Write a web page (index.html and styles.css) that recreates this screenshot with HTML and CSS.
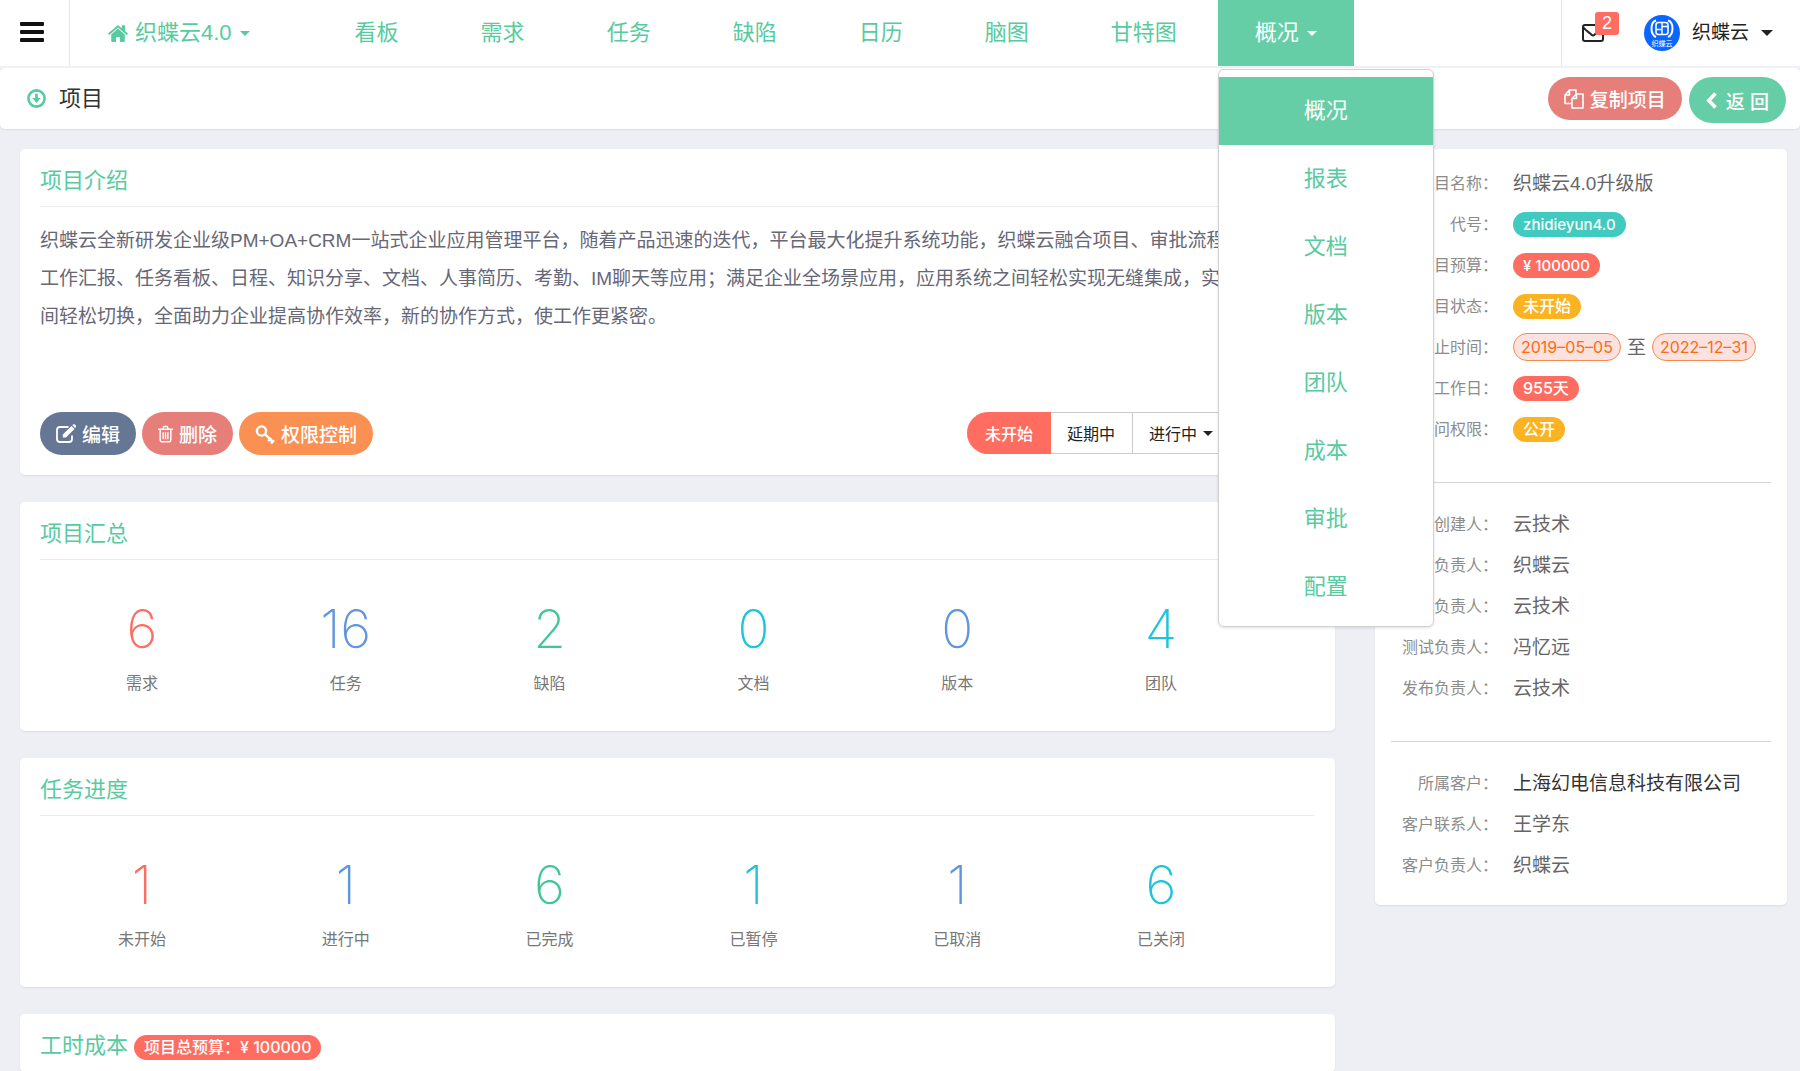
FILE: index.html
```html
<!DOCTYPE html>
<html lang="zh-CN">
<head>
<meta charset="utf-8">
<title>项目 - 织蝶云</title>
<meta name="viewport" content="width=device-width, initial-scale=1">
<link rel="stylesheet" href="styles.css">
</head>
<body>
<header class="topbar">
  <button class="menu-toggle" type="button" aria-label="菜单">
    <span class="bar"></span><span class="bar"></span><span class="bar"></span>
  </button>
  <nav class="nav">
    <a class="nav-home" href="#">
      <svg class="icon-home" viewBox="0 0 20 17" aria-hidden="true"><path fill="currentColor" d="M10 3.6 3.2 9.4V16c0 .5.4.9.9.9h4V12h3.8v4.900h4c.5 0 .9-.4.9-.9V9.400zM19.700 8.200 17 5.900V.8c0-.3-.2-.5-.5-.5h-2.200c-.3 0-.5.2-.5.5v2.400L11.100.9c-.6-.5-1.600-.5-2.200 0L.3 8.200c-.2.2-.2.500-.100.700l.700.800c.2.200.5.200.7.100L10 2.500l8.400 7.300c.2.100.5.100.7-.1l.7-.8c.1-.2.100-.5-.1-.7z"/></svg>
      <span>织蝶云4.0</span><span class="caret"></span>
    </a>
    <a class="nav-item" href="#">看板</a>
    <a class="nav-item" href="#">需求</a>
    <a class="nav-item" href="#">任务</a>
    <a class="nav-item" href="#">缺陷</a>
    <a class="nav-item" href="#">日历</a>
    <a class="nav-item" href="#">脑图</a>
    <a class="nav-item" href="#">甘特图</a>
    <div class="nav-drop">
      <a class="nav-current" href="#">概况<span class="caret"></span></a>
      <div class="dropdown">
        <a class="dropdown-item active" href="#">概况</a>
        <a class="dropdown-item" href="#">报表</a>
        <a class="dropdown-item" href="#">文档</a>
        <a class="dropdown-item" href="#">版本</a>
        <a class="dropdown-item" href="#">团队</a>
        <a class="dropdown-item" href="#">成本</a>
        <a class="dropdown-item" href="#">审批</a>
        <a class="dropdown-item" href="#">配置</a>
      </div>
    </div>
  </nav>
  <div class="account">
    <a class="mail" href="#" aria-label="消息">
      <svg class="icon-mail" viewBox="0 0 22 18" fill="none" stroke="currentColor" stroke-width="2" stroke-linejoin="round" aria-hidden="true"><rect x="1" y="1" width="20" height="16" rx="2"/><path d="M1.500 3.500c2 3 6 5.200 8 7.200 1 .9 2 .9 3 0 2-2 6-4.200 8-7.200"/></svg>
      <span class="mail-count">2</span>
    </a>
    <a class="user" href="#">
      <svg class="avatar" viewBox="0 0 36 36" aria-hidden="true">
        <circle cx="18" cy="18" r="18" fill="#0b66ff"/>
        <g fill="none" stroke="#fff" stroke-width="2"><path d="M12 5.500C8.500 6.500 7.500 9 7.500 13.500s1 7 4.500 8.500M24 5.500c3.500 1 4.500 3.500 4.500 8s-1 7-4.500 8.500"/><rect x="12" y="7.500" width="12" height="12" rx="2.500" stroke-width="1.600"/><path d="M18 7.500v12M12 14.500h6M18 11.500h6" stroke-width="1.400"/></g>
        <text x="18" y="30.500" text-anchor="middle" class="avatar-text">织蝶云</text>
      </svg>
      <span>织蝶云</span><span class="caret caret-user"></span>
    </a>
  </div>
</header>

<section class="subbar">
  <h1 class="page-title">
    <svg class="icon-circle" viewBox="0 0 18 18" aria-hidden="true"><circle cx="9" cy="9" r="7.700" fill="none" stroke="currentColor" stroke-width="2.400"/><path fill="currentColor" d="M7.700 4.500h2.600v4h2.700L9 13.200 5 8.500h2.700z"/></svg>
    项目
  </h1>
  <div class="page-actions">
    <button class="btn btn-red" type="button">
      <svg class="icon" viewBox="0 0 20 20" fill="none" stroke="currentColor" stroke-width="1.600" stroke-linejoin="round" aria-hidden="true"><path d="M8 14.500H1V6l4.500-5H12v4M5.500 1v5H1M12.500 5H19v14H8v-9.500zM12.500 5v4.500H8"/></svg>
      复制项目
    </button>
    <button class="btn btn-green" type="button">
      <svg class="icon-back" viewBox="0 0 11 17" fill="none" stroke="currentColor" stroke-width="3.600" aria-hidden="true"><path d="M9.500 1.500 2.800 8.500l6.700 7"/></svg>
      返 回
    </button>
  </div>
</section>

<main class="content">
  <div class="main-column">
    <section class="card">
      <h2 class="card-title">项目介绍</h2>
      <p class="intro">织蝶云全新研发企业级PM+OA+CRM一站式企业应用管理平台，随着产品迅速的迭代，平台最大化提升系统功能，织蝶云融合项目、审批流程、客户、工作汇报、任务看板、日程、知识分享、文档、人事简历、考勤、IM聊天等应用；满足企业全场景应用，应用系统之间轻松实现无缝集成，实现系统之间轻松切换，全面助力企业提高协作效率，新的协作方式，使工作更紧密。</p>
      <div class="card-actions">
        <div class="action-group">
          <button class="btn btn-slate" type="button">
            <svg class="icon" viewBox="0 0 20 20" fill="none" stroke="currentColor" aria-hidden="true"><path stroke-width="1.800" d="M12.500 3H4C2.300 3 1 4.300 1 6v9c0 1.700 1.300 3 3 3h9c1.700 0 3-1.300 3-3v-3.500"/><path fill="currentColor" stroke="none" d="m15.500 2 3 3-8.600 8.600H6.800v-3.100zM16.300 1.300l.8-.8c.5-.5 1.200-.5 1.700 0l1 1c.5.500.5 1.200 0 1.700l-.8.800z"/></svg>
            编辑
          </button>
          <button class="btn btn-red" type="button">
            <svg class="icon icon-narrow" viewBox="0 0 16 18" fill="none" stroke="currentColor" stroke-width="1.500" aria-hidden="true"><path d="M0 4h16M2.300 4v11.500c0 1 .7 1.700 1.500 1.700h8.400c.8 0 1.500-.7 1.500-1.700V4M5 4l.8-2.300c.1-.5.400-.7.900-.7h2.600c.5 0 .8.200.9.700L11 4M5.500 7v7.500M8 7v7.500M10.500 7v7.500"/></svg>
            删除
          </button>
          <button class="btn btn-orange" type="button">
            <svg class="icon" viewBox="0 0 20 20" fill="none" stroke="currentColor" aria-hidden="true"><circle cx="6.500" cy="7" r="4.600" stroke-width="2.400"/><path stroke-width="2.400" d="m9.700 10 8.600 8.200M13.200 17.200l3-3.200M16 19.500l3-3.200"/></svg>
            权限控制
          </button>
        </div>
        <div class="segmented">
          <button class="segment active" type="button">未开始</button>
          <button class="segment" type="button">延期中</button>
          <button class="segment" type="button">进行中<span class="caret caret-segment"></span></button>
          <button class="segment" type="button">已完成</button>
        </div>
      </div>
    </section>

    <section class="card">
      <h2 class="card-title">项目汇总</h2>
      <ul class="stats">
        <li class="stat red"><strong>6</strong><span>需求</span></li>
        <li class="stat blue"><strong>16</strong><span>任务</span></li>
        <li class="stat green"><strong>2</strong><span>缺陷</span></li>
        <li class="stat cyan"><strong>0</strong><span>文档</span></li>
        <li class="stat blue"><strong>0</strong><span>版本</span></li>
        <li class="stat cyan"><strong>4</strong><span>团队</span></li>
      </ul>
    </section>

    <section class="card">
      <h2 class="card-title">任务进度</h2>
      <ul class="stats">
        <li class="stat red"><strong>1</strong><span>未开始</span></li>
        <li class="stat blue"><strong>1</strong><span>进行中</span></li>
        <li class="stat green"><strong>6</strong><span>已完成</span></li>
        <li class="stat cyan"><strong>1</strong><span>已暂停</span></li>
        <li class="stat blue"><strong>1</strong><span>已取消</span></li>
        <li class="stat cyan"><strong>6</strong><span>已关闭</span></li>
      </ul>
    </section>

    <section class="card">
      <h2 class="card-title">工时成本 <span class="badge badge-red">项目总预算：¥ 100000</span></h2>
    </section>
  </div>

  <aside class="card side">
    <dl class="facts">
      <dt>项目名称：</dt><dd>织蝶云4.0升级版</dd>
      <dt>代号：</dt><dd><span class="badge badge-teal badge-latin">zhidieyun4.0</span></dd>
      <dt>项目预算：</dt><dd><span class="badge badge-red badge-latin">¥ 100000</span></dd>
      <dt>项目状态：</dt><dd><span class="badge badge-amber">未开始</span></dd>
      <dt>起止时间：</dt><dd><span class="badge badge-date">2019–05–05</span>至<span class="badge badge-date">2022–12–31</span></dd>
      <dt>工作日：</dt><dd><span class="badge badge-red">955天</span></dd>
      <dt>访问权限：</dt><dd><span class="badge badge-amber">公开</span></dd>
    </dl>
    <dl class="facts">
      <dt>创建人：</dt><dd>云技术</dd>
      <dt>产品负责人：</dt><dd>织蝶云</dd>
      <dt>开发负责人：</dt><dd>云技术</dd>
      <dt>测试负责人：</dt><dd>冯忆远</dd>
      <dt>发布负责人：</dt><dd>云技术</dd>
    </dl>
    <dl class="facts">
      <dt>所属客户：</dt><dd><a class="client" href="#">上海幻电信息科技有限公司</a></dd>
      <dt>客户联系人：</dt><dd>王学东</dd>
      <dt>客户负责人：</dt><dd>织蝶云</dd>
    </dl>
  </aside>
</main>
</body>
</html>
```
FILE: styles.css
```css
* {
  box-sizing: border-box;
}

body {
  margin: 0;
  background: #edeff4;
  color: #666;
  font-family: "Liberation Sans", "Noto Sans CJK SC", sans-serif;
  font-size: 19px;
}

a {
  color: inherit;
  text-decoration: none;
}

button {
  font: inherit;
  cursor: pointer;
}

.caret {
  border: 5px solid transparent;
  border-top-color: currentColor;
  border-bottom: 0;
}

/* Top bar */

.topbar {
  display: flex;
  height: 68px;
  background: #fff;
  border-bottom: 2px solid #eff1f7;
}

.menu-toggle {
  display: flex;
  flex: none;
  flex-direction: column;
  justify-content: center;
  gap: 4px;
  width: 70px;
  padding: 0 25px 2px 20px;
  background: none;
  border: 0;
  border-right: 1px solid #e6e6ea;
}

.bar {
  height: 4px;
  background: #111;
  border-radius: 1px;
}

.nav {
  display: flex;
  color: #57cb9f;
  font-size: 22px;
  line-height: 66px;
  white-space: nowrap;
}

.nav-home {
  display: flex;
  align-items: center;
  padding: 0 64px 0 38px;
}

.icon-home {
  width: 20px;
  height: 17px;
  margin-right: 7px;
}

.nav .caret {
  margin-left: 8px;
}

.nav-item {
  padding: 0 41px;
}

.nav-drop {
  position: relative;
}

.nav-current {
  display: flex;
  align-items: center;
  padding: 0 37px;
  background: #66cea6;
  color: #fff;
}

.dropdown {
  position: absolute;
  z-index: 10;
  top: 69px;
  left: 0;
  width: 216px;
  padding: 7px 0 5px;
  background: #fff;
  border: 1px solid #d0d2d4;
  border-radius: 6px;
  box-shadow: 0 1px 3px rgba(0, 0, 0, 0.12);
}

.dropdown-item {
  display: block;
  line-height: 68px;
  text-align: center;
}

.dropdown-item.active {
  background: #66cea6;
  color: #fff;
}

.account {
  display: flex;
  align-items: center;
  gap: 25px;
  margin-left: auto;
  padding: 0 27px 0 20px;
  border-left: 1px solid #e6e6ea;
  color: #222;
}

.mail {
  display: flex;
  position: relative;
  width: 37px;
}

.icon-mail {
  width: 22px;
  height: 18px;
}

.mail-count {
  position: absolute;
  right: 0;
  bottom: 7px;
  width: 24px;
  background: #ff6c60;
  border-radius: 3px;
  color: #fff;
  font-size: 18px;
  line-height: 23px;
  text-align: center;
}

.user {
  display: flex;
  align-items: center;
  line-height: 62px;
}

.avatar {
  width: 36px;
  height: 36px;
  margin-right: 12px;
}

.avatar-text {
  fill: #fff;
  font-size: 7px;
}

.caret-user {
  border-width: 6px;
  border-bottom: 0;
  margin-left: 12px;
}

/* Page heading */

.subbar {
  display: flex;
  align-items: flex-start;
  justify-content: space-between;
  min-height: 61px;
  padding: 9px 14px 5px 27px;
  background: #fff;
  border-radius: 5px;
  box-shadow: 0 1px 2px rgba(0, 0, 0, 0.08);
}

.page-title {
  display: flex;
  align-items: center;
  gap: 13px;
  margin: 0;
  color: #333;
  font-size: 22px;
  font-weight: 400;
  line-height: 43px;
}

.icon-circle {
  width: 19px;
  height: 19px;
  color: #57cb9f;
}

.page-actions {
  display: flex;
  align-items: flex-start;
  gap: 7px;
}

.btn {
  display: flex;
  align-items: center;
  height: 43px;
  gap: 6px;
  padding: 0 16px;
  border: 0;
  border-radius: 23px;
  color: #fff;
  font-weight: 500;
  white-space: nowrap;
}

.icon {
  width: 20px;
  height: 20px;
}

.icon-narrow {
  width: 15px;
  height: 18px;
}

.icon-back {
  width: 11px;
  height: 17px;
}

.btn-red {
  background: #e67f79;
}

.btn-green {
  height: 46px;
  gap: 9px;
  padding: 0 17px;
  background: #66cea6;
}

.btn-slate {
  background: #667796;
}

.btn-orange {
  background: #fa9153;
}

/* Cards */

.content {
  display: grid;
  grid-template-columns: minmax(0, 1fr) 412px;
  align-items: start;
  gap: 40px;
  padding: 20px 13px 0 20px;
}

.main-column {
  display: grid;
  gap: 27px;
}

.card {
  padding: 0 21px 0 20px;
  background: #fff;
  border-radius: 5px;
  box-shadow: 0 1px 2px rgba(0, 0, 0, 0.08);
}

.card-title {
  display: flex;
  align-items: center;
  gap: 6px;
  margin: 0;
  padding: 16px 0 9px;
  border-bottom: 1px solid #ebebeb;
  color: #57cb9f;
  font-size: 22px;
  font-weight: 400;
  line-height: 32px;
}

.intro {
  min-height: 190px;
  margin: 15px 0 0;
  color: #676776;
  line-height: 38px;
}

.card-actions {
  display: flex;
  justify-content: space-between;
  padding-bottom: 20px;
}

.action-group {
  display: flex;
  gap: 6px;
}

.segmented {
  display: flex;
  height: 42px;
}

.segment {
  display: flex;
  align-items: center;
  padding: 0 17px 0 16px;
  background: #fff;
  border: 1px solid #ccc;
  border-left-width: 0;
  color: #222;
  font-size: 16px;
}

.segment.active {
  padding: 0 17px 0 18px;
  background: #ff6c60;
  border-color: #ff6c60;
  border-radius: 21px 0 0 21px;
  color: #fff;
  font-weight: 500;
}

.segment:last-child {
  padding-right: 18px;
  border-radius: 0 21px 21px 0;
}

.caret-segment {
  margin-left: 6px;
}

/* Figures */

.stats {
  display: grid;
  grid-template-columns: repeat(6, 16%);
  margin: 0;
  padding: 39px 0 34px;
  list-style: none;
}

.stat {
  display: grid;
  gap: 12px;
  text-align: center;
}

.stat strong {
  font-family: Inter, sans-serif;
  font-size: 53px;
  font-weight: 200;
  line-height: 60px;
}

.stat span {
  color: #777;
  font-size: 16px;
  line-height: 26px;
}

.red {
  color: #ff6c60;
}

.blue {
  color: #6096e0;
}

.green {
  color: #3fc796;
}

.cyan {
  color: #1dc4dc;
}

/* Badges */

.badge {
  margin-top: 3px;
  padding: 0 10px;
  border-radius: 14px;
  color: #fff;
  font-family: Inter, "Noto Sans CJK SC", sans-serif;
  font-size: 16px;
  font-weight: 500;
  line-height: 25px;
}

.badge-latin {
  font-size: 15px;
}

.badge-red {
  background: #ff6c60;
}

.badge-teal {
  background: #41cac0;
}

.badge-amber {
  background: #fcb322;
}

.badge-date {
  padding: 0 7px;
  background: #fbe2df;
  border: 1px solid #fa8a4b;
  color: #ff6a10;
  font-weight: 400;
  line-height: 26px;
}

/* Side panel */

.side {
  padding: 12px 16px 21px;
}

.facts {
  display: grid;
  grid-template-columns: 107px minmax(0, 1fr);
  grid-auto-rows: 41px;
  column-gap: 15px;
  align-items: center;
  margin: 0;
}

.facts + .facts {
  margin-top: 34px;
  padding-top: 19px;
  border-top: 1px solid #d4d4d4;
}

.facts dt {
  color: #8c8c8c;
  font-size: 16px;
  text-align: right;
  white-space: nowrap;
}

.facts dd {
  display: flex;
  align-items: center;
  gap: 6px;
  margin: 0;
  white-space: nowrap;
}

.client {
  color: #333;
}
```
